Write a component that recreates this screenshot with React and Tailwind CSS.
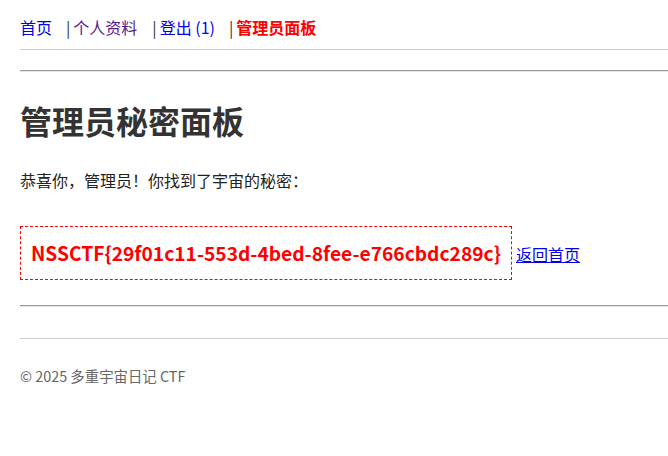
import React from 'react';

const font = { fontFamily: '"Noto Sans CJK SC", "Noto Sans", sans-serif' };

const App = () => {
  return (
    <div className="min-h-[456px] w-full bg-white pl-5 text-[#333]" style={font}>
      {/* Top nav */}
      <nav className="flex items-center border-b border-[#ccc] pt-[15px] pb-[10px] text-[16px] leading-[24px]">
        <a href="#" className="mr-[14px] text-[#0000ee]">首页</a>
        <span className="mr-[3px] text-[#333]">|</span>
        <a href="#" className="mr-[15px] text-[#551a8b]">个人资料</a>
        <span className="mr-[3px] text-[#333]">|</span>
        <a href="#" className="mr-[14px] text-[#0000ee]">登出 (1)</a>
        <span className="mr-[3px] text-[#333]">|</span>
        <a href="#" className="font-bold text-[#ff0000]">管理员面板</a>
      </nav>

      <div className="mt-5 border-t border-b border-t-[#9a9a9a] border-b-[#e6e6e6]" />

      {/* Main */}
      <h1 className="mt-[26px] text-[32px] font-bold leading-[44px] text-[#333]">管理员秘密面板</h1>
      <p className="mt-[26px] text-[16px] leading-[24px] text-[#222]">恭喜你，管理员！你找到了宇宙的秘密：</p>

      <div className="mt-[34px] flex items-baseline">
        <div className="inline-block border border-dashed border-[#ff0000] px-[10px] py-[10px] text-[19.2px] font-bold leading-[32px] text-[#ff0000]">
          NSSCTF{'{'}29f01c11-553d-4bed-8fee-e766cbdc289c{'}'}
        </div>
        <a href="#" className="ml-[4px] text-[16px] text-[#0000ee] underline">返回首页</a>
      </div>

      <div className="mt-[25px] border-t border-b border-t-[#9a9a9a] border-b-[#e6e6e6]" />

      {/* Footer */}
      <footer className="mt-[31px] border-t border-[#ccc] pt-[27px] text-[14.4px] leading-[20px] text-[#666]">
        © 2025 多重宇宙日记 CTF
      </footer>
    </div>
  );
};

export default App;
